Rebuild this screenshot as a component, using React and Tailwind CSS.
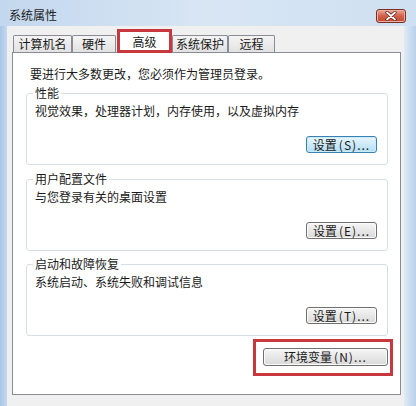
import React from 'react';

const tabs = [
  { label: '计算机名', w: 'w-[59px]' },
  { label: '硬件', w: 'w-[44px]' },
  { label: '高级', w: 'w-[55px]', active: true },
  { label: '系统保护', w: 'w-[56px]' },
  { label: '远程', w: 'w-[47px]' },
];

const groups = [
  { title: '性能', desc: '视觉效果，处理器计划，内存使用，以及虚拟内存', key: 'S', focused: true },
  { title: '用户配置文件', desc: '与您登录有关的桌面设置', key: 'E' },
  { title: '启动和故障恢复', desc: '系统启动、系统失败和调试信息', key: 'T' },
];

const WinButton = ({ children, focused, className = '' }) => (
  <button
    className={
      'flex items-center justify-center rounded-[3px] border text-[12px] leading-[14px] text-[#1a1a1a] ' +
      (focused
        ? 'border-[#3c7fb1] bg-gradient-to-b from-[#e8f6fd] to-[#b2def5] shadow-[inset_0_0_0_1px_#c8ecfb] '
        : 'border-[#707070] bg-gradient-to-b from-[#f6f6f6] to-[#d9d9d9] shadow-[inset_0_0_0_1px_#fbfbfb] ') +
      className
    }
  >
    {children}
  </button>
);

const GroupBox = ({ title, desc, hotkey, focused, className = '' }) => (
  <div className={'ml-[13px] mr-[12px] h-[72px] rounded-[3px] border border-[#d5dfe5] pl-[8px] pr-[10px] ' + className}>
    <div className="-mt-[8px] -ml-[2px] block w-fit bg-white px-[2px] text-[12px] leading-[14px]">{title}</div>
    <div className="mt-[4px] text-[12px] leading-[14px]">{desc}</div>
    <div className="mt-[18px] flex justify-end">
      <WinButton focused={focused} className="h-[17px] w-[71px]">
        设置<span className="ml-[2px] tracking-[1px]">({hotkey})...</span>
      </WinButton>
    </div>
  </div>
);

export default function App() {
  return (
    <div className="flex h-[406px] w-[416px] flex-col overflow-hidden bg-gradient-to-r from-[#c3d7ee] via-[#d8e6f4] to-[#cfe0f2] font-['Noto_Sans_CJK_SC',sans-serif] text-[#1a1a1a]">
      {/* title bar */}
      <div className="flex h-[26px] shrink-0 items-start justify-between pl-[9px] pr-[10px]">
        <span className="mt-[8px] text-[12px] leading-[14px] text-[#222]">系统属性</span>
        <div className="mt-[9px] flex h-[14px] w-[30px] items-center justify-center rounded-[3px] border border-[#7b2f25] bg-gradient-to-b from-[#e8a898] via-[#d2604a] to-[#c24a30] shadow-[inset_0_0_0_1px_#eab0a4]">
          <svg width="12" height="10" viewBox="0 0 12 10">
            <path d="M2 1.5 L10 8.5 M10 1.5 L2 8.5" stroke="#5a1a12" strokeWidth="3.2" strokeLinecap="round" />
            <path d="M2 1.5 L10 8.5 M10 1.5 L2 8.5" stroke="#ffffff" strokeWidth="1.8" strokeLinecap="round" />
          </svg>
        </div>
      </div>

      <div className="flex flex-1">
        {/* left frame */}
        <div className="w-[7px] bg-gradient-to-r from-[#a9c6e6] to-[#c4d9ef]" />

        {/* client area */}
        <div className="flex flex-1 flex-col bg-[#f0f0f0] pl-[5px] pr-[3px]">
          {/* tabs */}
          <div className="flex h-[27px] items-end pl-[1px]">
            {tabs.map((t) =>
              t.active ? (
                <div
                  key={t.label}
                  className={'relative z-10 ml-[1px] flex h-[24px] items-start justify-center border-[3px] border-[#c8363e] bg-white pt-[3px] text-[12px] leading-[14px] ' + t.w}
                >
                  {t.label}
                </div>
              ) : (
                <div
                  key={t.label}
                  className={'mb-[1px] flex h-[17px] items-center justify-center rounded-t-[2px] border border-b-0 border-[#898c95] bg-gradient-to-b from-[#f4f4f4] to-[#e2e2e2] text-[12px] leading-[14px] ' + t.w}
                >
                  {t.label}
                </div>
              )
            )}
          </div>

          {/* tab panel */}
          <div className="-mt-[1px] flex h-[343px] flex-col border border-[#898c95] bg-white pt-[14px]">
            <div className="ml-[17px] text-[12px] leading-[14px]">要进行大多数更改，您必须作为管理员登录。</div>

            <GroupBox {...groups[0]} hotkey={groups[0].key} className="mt-[12px]" />
            <GroupBox {...groups[1]} hotkey={groups[1].key} className="mt-[14px]" />
            <GroupBox {...groups[2]} hotkey={groups[2].key} className="mt-[13px]" />

            <div className="mr-[7px] mt-[3px] flex justify-end">
              <div className="border-[3px] border-[#c8363e] pb-[7px] pl-[7px] pr-[2px] pt-[6px]">
                <WinButton className="h-[18px] w-[125px]">
                  环境变量<span className="ml-[2px] tracking-[1px]">(N)...</span>
                </WinButton>
              </div>
            </div>
          </div>
        </div>

        {/* right frame */}
        <div className="w-[12px] bg-gradient-to-r from-[#dfeaf6] to-[#b9d1ea]" />
      </div>
    </div>
  );
}
